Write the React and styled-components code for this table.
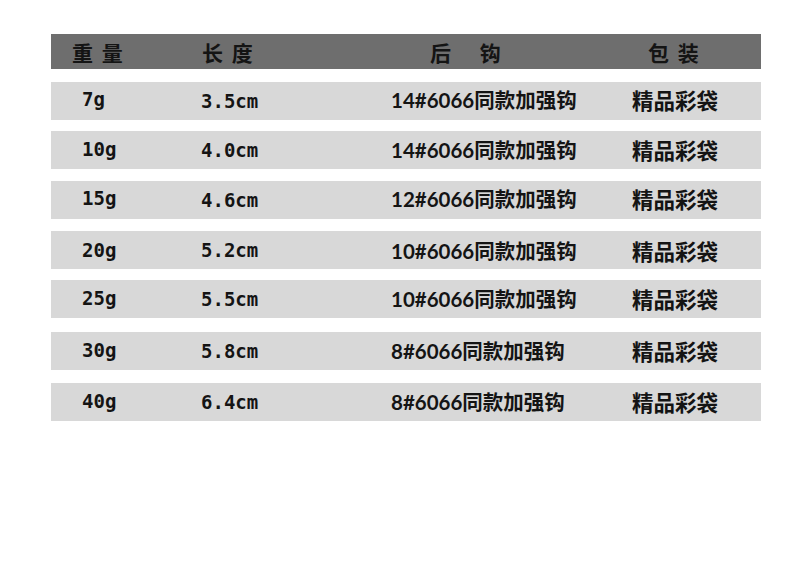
import React from "react";
import styled, { createGlobalStyle } from "styled-components";

const GlobalStyle = createGlobalStyle`
  html, body {
    margin: 0;
    padding: 0;
    background: #ffffff;
  }
  body {
    font-family: "Noto Sans CJK SC", "Liberation Sans", sans-serif;
    color: #111111;
  }
`;

const Page = styled.div`
  width: 800px;
  height: 580px;
  padding: 34px 0 0 51px;
  box-sizing: border-box;
`;

const Table = styled.div`
  width: 710px;
  display: flex;
  flex-direction: column;
`;

const HeadRow = styled.div`
  height: 35px;
  background: #6e6e6e;
  display: grid;
  grid-template-columns: 130px 228px 218px 1fr;
  align-items: center;
  padding-left: 21px;
`;

const HeadCell = styled.span`
  font-family: "Noto Sans CJK SC", sans-serif;
  font-weight: 700;
  font-size: 21px;
  line-height: 1;
  color: #141414;
  white-space: pre;
  word-spacing: ${(p) => p.$spread}px;
  padding-top: 1px;
`;

const Row = styled.div`
  margin-top: ${(p) => p.$gap}px;
  height: 38px;
  background: #d8d8d8;
  display: grid;
  grid-template-columns: 119px 190px 241px 1fr;
  align-items: center;
  padding-left: 31px;
`;

const MonoCell = styled.span`
  font-family: "DejaVu Sans Mono", "Liberation Mono", monospace;
  font-weight: 700;
  font-size: ${(p) => p.$size}px;
  color: #141414;
  line-height: 1;
  margin-top: ${(p) => p.$nudge || 0}px;
`;

const HookCell = styled.span`
  font-family: Lato, "Noto Sans CJK SC", sans-serif;
  font-weight: 700;
  font-size: 20.5px;
  color: #141414;
  line-height: 1;
  white-space: nowrap;
  margin-top: ${(p) => p.$nudge || 0}px;
`;

const PackCell = styled.span`
  font-family: "Noto Sans CJK SC", sans-serif;
  font-weight: 700;
  font-size: 21.5px;
  color: #141414;
  line-height: 1;
  margin-top: ${(p) => p.$nudge || 0}px;
`;

const rows = [
  { weight: "7g", length: "3.5cm", hook: "14#6066同款加强钩", gap: 13, nudge: -2 },
  { weight: "10g", length: "4.0cm", hook: "14#6066同款加强钩", gap: 11, nudge: 0 },
  { weight: "15g", length: "4.6cm", hook: "12#6066同款加强钩", gap: 12, nudge: -2 },
  { weight: "20g", length: "5.2cm", hook: "10#6066同款加强钩", gap: 12, nudge: 2 },
  { weight: "25g", length: "5.5cm", hook: "10#6066同款加强钩", gap: 11, nudge: 0 },
  { weight: "30g", length: "5.8cm", hook: "8#6066同款加强钩", gap: 14, nudge: 0 },
  { weight: "40g", length: "6.4cm", hook: "8#6066同款加强钩", gap: 13, nudge: 0 },
];

export default function App() {
  return (
    <>
      <GlobalStyle />
      <Page>
        <Table>
          <HeadRow>
            <HeadCell $spread={4}>重 量</HeadCell>
            <HeadCell $spread={4}>长 度</HeadCell>
            <HeadCell $spread={24}>后 钩</HeadCell>
            <HeadCell $spread={4}>包 装</HeadCell>
          </HeadRow>
          {rows.map((r) => (
            <Row key={r.weight} $gap={r.gap}>
              <MonoCell $size={19} $nudge={r.nudge - 2}>{r.weight}</MonoCell>
              <MonoCell $size={19}>{r.length}</MonoCell>
              <HookCell $nudge={r.nudge}>{r.hook}</HookCell>
              <PackCell $nudge={r.nudge}>精品彩袋</PackCell>
            </Row>
          ))}
        </Table>
      </Page>
    </>
  );
}
